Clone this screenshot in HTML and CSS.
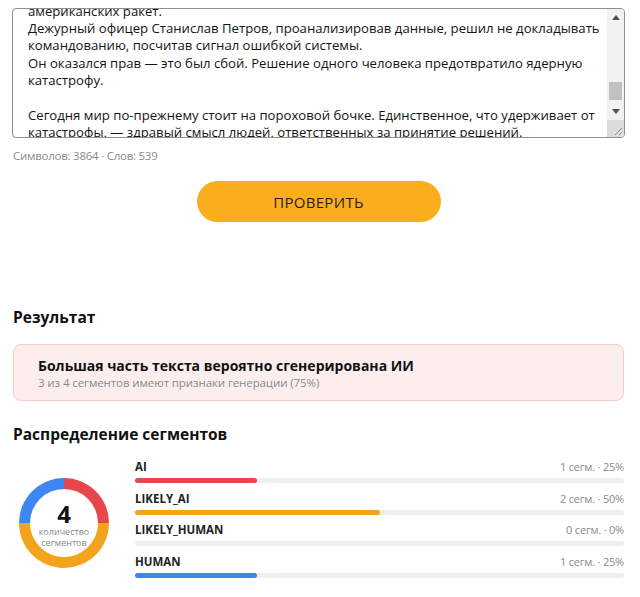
FILE: index.html
```html
<!DOCTYPE html>
<html lang="ru">
<head>
<meta charset="utf-8">
<link rel="stylesheet" href="styles.css">
</head>
<body>
<div class="page">
  <div class="editor">
    <div class="editor-view">
      <div class="editor-text">
        <span class="ln">американских ракет.</span>
        <span class="ln">Дежурный офицер Станислав Петров, проанализировав данные, решил не докладывать</span>
        <span class="ln">командованию, посчитав сигнал ошибкой системы.</span>
        <span class="ln">Он оказался прав — это был сбой. Решение одного человека предотвратило ядерную</span>
        <span class="ln">катастрофу.</span>
        <span class="ln">&nbsp;</span>
        <span class="ln">Сегодня мир по-прежнему стоит на пороховой бочке. Единственное, что удерживает от</span>
        <span class="ln">катастрофы, — здравый смысл людей, ответственных за принятие решений.</span>
      </div>
    </div>
    <div class="scrollbar">
      <div class="sb-track">
        <div class="sb-btn"><svg width="8" height="5" viewBox="0 0 8 5"><path d="M0 5 L4 0 L8 5 Z" fill="#505050"/></svg></div>
        <div class="sb-space sb-space-top"></div>
        <div class="sb-thumb"></div>
        <div class="sb-space"></div>
        <div class="sb-btn"><svg width="8" height="5" viewBox="0 0 8 5"><path d="M0 0 L4 5 L8 0 Z" fill="#505050"/></svg></div>
      </div>
      <div class="sb-corner"><svg width="17" height="17" viewBox="0 0 17 17"><path d="M15 8 L8 15 M15 12 L12 15" stroke="#8a8a8a" stroke-width="1"/></svg></div>
    </div>
  </div>
  <div class="counter">Символов: 3864 · Слов: 539</div>
  <div class="actions"><button class="check-btn">ПРОВЕРИТЬ</button></div>

  <h2 class="title title-result">Результат</h2>
  <div class="alert">
    <div class="alert-title">Большая часть текста вероятно сгенерирована ИИ</div>
    <div class="alert-sub">3 из 4 сегментов имеют признаки генерации (75%)</div>
  </div>

  <h2 class="title title-dist">Распределение сегментов</h2>
  <div class="chart">
    <div class="donut">
      <div class="donut-hole">
        <div class="donut-num">4</div>
        <div class="donut-cap">количество</div>
        <div class="donut-cap">сегментов</div>
      </div>
    </div>
    <div class="rows">
      <div class="row">
        <div class="row-head"><span class="row-label">AI</span><span class="row-val">1 сегм. · 25%</span></div>
        <div class="track"><div class="fill fill-ai" style="width:25%"></div></div>
      </div>
      <div class="row">
        <div class="row-head"><span class="row-label">LIKELY_AI</span><span class="row-val">2 сегм. · 50%</span></div>
        <div class="track"><div class="fill fill-likely-ai" style="width:50%"></div></div>
      </div>
      <div class="row">
        <div class="row-head"><span class="row-label">LIKELY_HUMAN</span><span class="row-val">0 сегм. · 0%</span></div>
        <div class="track"><div class="fill fill-likely-human" style="width:0%"></div></div>
      </div>
      <div class="row">
        <div class="row-head"><span class="row-label">HUMAN</span><span class="row-val">1 сегм. · 25%</span></div>
        <div class="track"><div class="fill fill-human" style="width:25%"></div></div>
      </div>
    </div>
  </div>
</div>
</body>
</html>
```
FILE: styles.css
```css
* { box-sizing: border-box; }
html, body { margin: 0; padding: 0; background: #fff; }
body {
  font-family: "Open Sans", "Noto Sans", "DejaVu Sans", sans-serif;
  color: #222;
}
.page {
  padding: 8px 0 0 13px;
  width: 624px;
}
.editor {
  display: flex;
  margin-left: -1px;
  width: 613px;
  height: 130px;
  border: 1px solid #8f8f8f;
  border-radius: 4px;
  overflow: hidden;
}
.editor-view {
  flex: 1;
  overflow: hidden;
  padding-left: 15px;
}
.editor-text {
  margin-top: -6.3px;
  font-size: 13.15px;
  line-height: 17.35px;
  color: #141414;
}
.ln { display: block; white-space: nowrap; }
.scrollbar {
  width: 17px;
  display: flex;
  flex-direction: column;
  background: #f1f1f1;
}
.sb-track {
  flex: 1;
  display: flex;
  flex-direction: column;
}
.sb-btn {
  height: 17px;
  display: flex;
  align-items: center;
  justify-content: center;
}
.sb-space { flex: 1; }
.sb-space-top { flex: 0 0 56px; }
.sb-thumb {
  height: 18px;
  margin: 0 2px;
  background: #c1c1c1;
}
.sb-corner {
  height: 17px;
  background: #dcdcdc;
}
.sb-corner svg { display: block; }
.counter {
  margin-top: 10px;
  font-size: 11.5px;
  letter-spacing: -0.25px;
  line-height: 16px;
  color: #8a8a8a;
}
.actions {
  display: flex;
  justify-content: center;
  margin-top: 17px;
}
.check-btn {
  width: 244px;
  height: 41px;
  border: none;
  border-radius: 21px;
  background: #fbae1d;
  font-family: "Open Sans", "Noto Sans", sans-serif;
  font-size: 15px;
  letter-spacing: 0.3px;
  color: #222;
  padding: 0;
}
.title {
  margin: 0;
  font-size: 15.5px;
  line-height: 22px;
  font-weight: 700;
  color: #111;
}
.title-result { margin-top: 84px; }
.alert {
  margin-top: 16px;
  width: 611px;
  border: 1px solid #f4cccc;
  background: #fdeeee;
  border-radius: 8px;
  padding: 12px 24px 10px;
}
.alert-title {
  font-size: 14px;
  line-height: 18px;
  font-weight: 700;
  color: #111;
}
.alert-sub {
  font-size: 11.5px;
  letter-spacing: -0.1px;
  line-height: 15px;
  color: #8a8a8a;
}
.title-dist { margin-top: 22px; }
.chart {
  display: flex;
  align-items: flex-start;
  margin-top: 14px;
  width: 611px;
}
.donut {
  flex: 0 0 90px;
  height: 90px;
  margin: 19px 26px 0 6px;
  border-radius: 50%;
  background: conic-gradient(#e6474b 0 25%, #f3a41c 25% 75%, #3e86f3 75% 100%);
  display: flex;
  align-items: center;
  justify-content: center;
}
.donut-hole {
  width: 68px;
  height: 68px;
  border-radius: 50%;
  background: #fff;
  display: flex;
  flex-direction: column;
  align-items: center;
  justify-content: center;
  text-align: center;
  padding-top: 3px;
}
.donut-num {
  font-size: 24px;
  line-height: 24px;
  font-weight: 700;
  color: #111;
}
.donut-cap {
  font-size: 9px;
  line-height: 11px;
  color: #8a8a8a;
}
.rows {
  flex: 1;
  display: flex;
  flex-direction: column;
  gap: 7.5px;
}
.row-head {
  display: flex;
  justify-content: space-between;
  align-items: baseline;
  line-height: 16px;
}
.row-label {
  font-size: 11.5px;
  font-weight: 700;
  color: #222;
}
.row-val {
  font-size: 11px;
  letter-spacing: -0.2px;
  color: #8a8a8a;
}
.track {
  margin-top: 3px;
  height: 5px;
  background: #eeeeee;
  border-radius: 3px;
}
.fill {
  height: 100%;
  border-radius: 3px;
}
.fill-ai { background: #e6474b; }
.fill-likely-ai { background: #f3a41c; }
.fill-likely-human { background: #cfcfcf; }
.fill-human { background: #3e86f3; }
```
